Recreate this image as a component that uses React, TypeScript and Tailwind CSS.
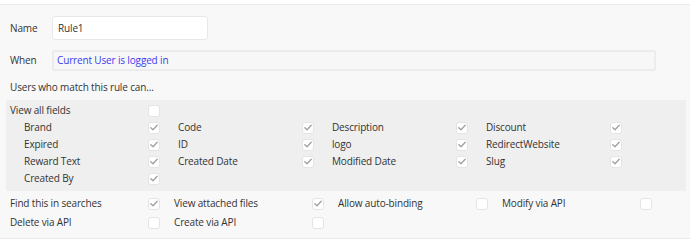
import React from 'react';

const fields = [
  ['Brand', 'Code', 'Description', 'Discount'],
  ['Expired', 'ID', 'logo', 'RedirectWebsite'],
  ['Reward Text', 'Created Date', 'Modified Date', 'Slug'],
  ['Created By'],
];

const extras = [
  [
    { label: 'Find this in searches', checked: true },
    { label: 'View attached files', checked: true },
    { label: 'Allow auto-binding', checked: false },
    { label: 'Modify via API', checked: false },
  ],
  [
    { label: 'Delete via API', checked: false },
    { label: 'Create via API', checked: false },
  ],
];

const Checkbox: React.FC<{ checked?: boolean }> = ({ checked }) => (
  <div className="w-[12px] h-[12px] shrink-0 rounded-[3px] bg-white border border-[#e4e4e4] flex items-center justify-center">
    {checked && (
      <svg width="8" height="7" viewBox="0 0 8 7" fill="none">
        <path d="M0.8 3.8 L3 5.8 L7.2 1.2" stroke="#a3a3a3" strokeWidth="1.4" strokeLinecap="round" strokeLinejoin="round" />
      </svg>
    )}
  </div>
);

export default function App() {
  return (
    <div className="w-[690px] h-[244px] bg-white pt-[4px] font-['Open_Sans',sans-serif] text-[10px] tracking-[-0.15px] text-[#333]">
      <div className="h-[235px] border-y border-[#e9e9e9] bg-[#f8f8f8] pt-[11px]">
        {/* Name */}
        <div className="flex items-center pl-[10px]">
          <div className="w-[42px]">Name</div>
          <div className="w-[156px] h-[24px] bg-white border border-[#e8e8e8] rounded-[3px] flex items-center px-[5px]">Rule1</div>
        </div>

        {/* When */}
        <div className="flex items-center pl-[10px] mt-[10px]">
          <div className="w-[42px]">When</div>
          <div className="w-[604px] h-[21px] bg-[#f7f7f7] border-2 border-[#ececec] rounded-[2px] flex items-center px-[3px] text-[#3b3bf0]">
            Current User is logged in
          </div>
        </div>

        <div className="pl-[10px] mt-[8px] leading-[16px]">Users who match this rule can...</div>

        {/* Field permissions */}
        <div className="ml-[6px] mr-[4px] mt-[5px] bg-[#efefef] pt-[2px] pb-[4px]">
          <div className="flex items-center h-[17px] pl-[4px]">
            <div className="w-[138px]">View all fields</div>
            <Checkbox />
          </div>
          {fields.map((row, i) => (
            <div key={i} className="flex h-[17px] pl-[18px]">
              {row.map((f) => (
                <div key={f} className="w-[154px] flex items-center">
                  <div className="w-[124px]">{f}</div>
                  <Checkbox checked />
                </div>
              ))}
            </div>
          ))}
        </div>

        {/* Other permissions */}
        <div className="pt-[3px] pl-[10px]">
          {extras.map((row, i) => (
            <div key={i} className="flex h-[19px]">
              {row.map((e) => (
                <div key={e.label} className="w-[164px] flex items-center">
                  <div className="w-[138px]">{e.label}</div>
                  <Checkbox checked={e.checked} />
                </div>
              ))}
            </div>
          ))}
        </div>
      </div>
    </div>
  );
}
